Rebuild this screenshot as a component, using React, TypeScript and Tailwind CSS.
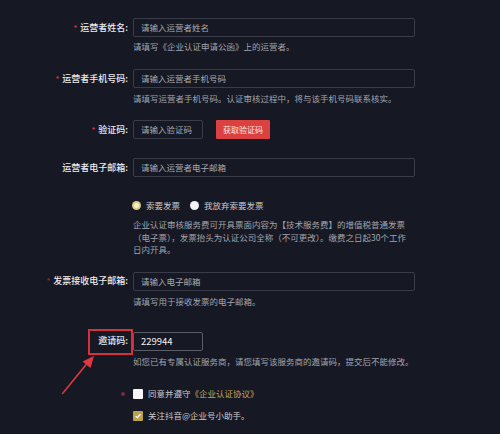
import React from "react";

type FieldProps = {
  label: string;
  required?: boolean;
  dimStar?: boolean;
  children: React.ReactNode;
};

function FieldRow({ label, required, dimStar, children }: FieldProps) {
  return (
    <div className="flex items-center h-[19px]">
      <div className="w-[128px] flex items-center justify-end text-[9px] font-medium text-[#ececf0] whitespace-nowrap">
        {required && (
          <span className={`mr-[3px] text-[8px] ${dimStar ? "text-[#8c2f3f]" : "text-[#e8343e]"}`}>*</span>
        )}
        <span>{label}:</span>
      </div>
      <div className="ml-[5px] flex items-center h-full">{children}</div>
    </div>
  );
}

function TextInput({ placeholder, width = "w-[282px]" }: { placeholder: string; width?: string }) {
  return (
    <div className={`${width} h-[19px] border border-[#3a3d49] rounded-[2px] bg-[#161823] flex items-center px-[7px] text-[8.5px] text-[#a9aab0]`}>
      {placeholder}
    </div>
  );
}

function Help({ children, className = "" }: { children: React.ReactNode; className?: string }) {
  return (
    <div className={`ml-[133px] text-[8.5px] leading-[12px] text-[#a2a4ad] whitespace-nowrap ${className}`}>{children}</div>
  );
}

export default function App() {
  return (
    <div className="relative w-[500px] h-[434px] overflow-hidden bg-[#161823] font-['Noto_Sans_CJK_SC',sans-serif]">
      <div className="pt-[18px]">
        <FieldRow label="运营者姓名" required>
          <TextInput placeholder="请输入运营者姓名" />
        </FieldRow>
        <Help className="mt-[3px]">请填写《企业认证申请公函》上的运营者。</Help>

        <div className="mt-[17px]">
          <FieldRow label="运营者手机号码" required>
            <TextInput placeholder="请输入运营者手机号码" />
          </FieldRow>
        </div>
        <Help className="mt-[4px]">请填写运营者手机号码。认证审核过程中，将与该手机号码联系核实。</Help>

        <div className="mt-[16px]">
          <FieldRow label="验证码" required>
            <TextInput placeholder="请输入验证码" width="w-[70px]" />
            <button className="ml-[13px] w-[54px] h-[19px] bg-[#dc4141] rounded-[1px] text-[8px] text-[#f6e6e6] flex items-center justify-center">
              获取验证码
            </button>
          </FieldRow>
        </div>

        <div className="mt-[19px]">
          <FieldRow label="运营者电子邮箱">
            <TextInput placeholder="请输入运营者电子邮箱" />
          </FieldRow>
        </div>

        <div className="mt-[22px] ml-[132px] flex items-center h-[12px] text-[8.5px] text-[#c9cad0]">
          <span className="w-[9px] h-[9px] rounded-full bg-[#d9cb84] flex items-center justify-center">
            <span className="w-[5px] h-[5px] rounded-full bg-[#f4efcd]" />
          </span>
          <span className="ml-[5px]">索要发票</span>
          <span className="ml-[10px] w-[9px] h-[9px] rounded-full bg-[#f2f2f4]" />
          <span className="ml-[5px]">我放弃索要发票</span>
        </div>

        <div className="mt-[7px] ml-[133px] text-[8.5px] leading-[12.5px] text-[#a2a4ad] whitespace-nowrap">
          企业认证审核服务费可开具票面内容为【技术服务费】的增值税普通发票
          <br />
          （电子票），发票抬头为认证公司全称（不可更改）。缴费之日起30个工作
          <br />
          日内开具。
        </div>

        <div className="mt-[16px]">
          <FieldRow label="发票接收电子邮箱" required dimStar>
            <TextInput placeholder="请输入电子邮箱" />
          </FieldRow>
        </div>
        <Help className="mt-[4px]">请填写用于接收发票的电子邮箱。</Help>

        <div className="mt-[25px]">
          <FieldRow label="邀请码">
            <div className="w-[70px] h-[19px] border border-[#5a5d68] rounded-[2px] flex items-center px-[7px] text-[9.5px] text-[#f2f2f4]">
              229944
            </div>
          </FieldRow>
        </div>
        <Help className="mt-[4px]">如您已有专属认证服务商，请您填写该服务商的邀请码，提交后不能修改。</Help>

        <div className="mt-[21px] flex items-center h-[12px] text-[8.5px] text-[#c9cad0]">
          <span className="ml-[121px] w-[4px] h-[4px] rounded-full bg-[#7a2a3a]" />
          <span className="ml-[8px] w-[10px] h-[10px] bg-[#f7f7f7] rounded-[1px]" />
          <span className="ml-[5px]">同意并遵守</span>
          <span className="text-[#c8a659]">《企业认证协议》</span>
        </div>

        <div className="mt-[10px] ml-[133px] flex items-center h-[12px] text-[8.5px] text-[#c9cad0]">
          <span className="w-[10px] h-[10px] bg-[#b9a24a] rounded-[1px] flex items-center justify-center">
            <svg viewBox="0 0 10 10" className="w-[8px] h-[8px]">
              <path d="M2 5.2 L4.2 7.2 L8 2.8" fill="none" stroke="#fff" strokeWidth="1.5" />
            </svg>
          </span>
          <span className="ml-[5px]">关注抖音@企业号小助手。</span>
        </div>
      </div>

      {/* 标注：红框 + 箭头 */}
      <div className="absolute left-[88px] top-[329px] w-[45px] h-[26px] border-2 border-[#d6303c]" />
      <svg className="absolute left-0 top-0 w-[500px] h-[434px] pointer-events-none" viewBox="0 0 500 434">
        <polygon points="62.5,393.5 63.5,392.5 88,362.5 86,364.5" fill="#e0383f" stroke="#e0383f" strokeWidth="1.2" strokeLinejoin="round" />
        <polygon points="94,356 90.5,368 82.5,361.5" fill="#e0383f" />
      </svg>
    </div>
  );
}
